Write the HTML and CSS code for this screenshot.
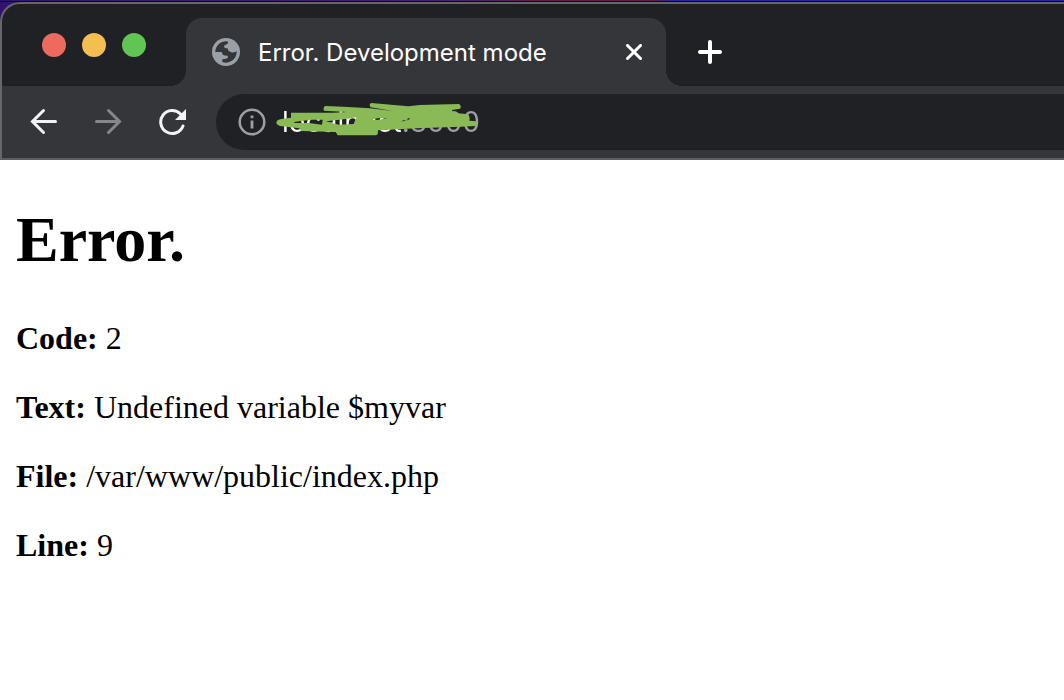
FILE: index.html
```html
<!DOCTYPE html>
<html lang="en">
<head>
<meta charset="utf-8">
<title>Error. Development mode</title>
<link rel="stylesheet" href="styles.css">
</head>
<body>
<div class="desktop">
  <header class="window">
    <div class="tabstrip">
      <div class="lights">
        <button class="light light-close" aria-label="Close window"></button>
        <button class="light light-min" aria-label="Minimize window"></button>
        <button class="light light-max" aria-label="Maximize window"></button>
      </div>
      <div class="tab">
        <svg class="globe" viewBox="0 0 28 28" aria-hidden="true">
          <circle cx="14" cy="14" r="14" fill="#9aa0a6"/>
          <path fill="#35363a" d="M3.300 14A10.700 10.700 0 0 1 15.800 3.400C16.800 5 15 6.800 12.500 7.300C11.600 9 12.500 10.600 15.600 10.300L16.200 12.600C17.500 13 18.500 15 21 14.400L24.700 13.500A10.700 10.700 0 0 1 10.300 24V21.500C11.500 20.600 15.600 21.500 15.900 19C16 17.500 14.500 17.600 13.500 17.500C10.500 17.500 10.500 15.500 9.500 14Z"/>
        </svg>
        <span class="tab-title">Error. Development mode</span>
        <button class="icon-button" aria-label="Close tab">
          <svg class="close-icon" viewBox="0 0 16 16"><path d="M1.500 1.500l13 13M14.500 1.500l-13 13"/></svg>
        </button>
      </div>
      <button class="icon-button new-tab" aria-label="New tab">
        <svg class="plus-icon" viewBox="0 0 24 24"><path d="M12 2v20M2 12h20"/></svg>
      </button>
    </div>
    <div class="toolbar">
      <nav class="nav">
        <button class="icon-button" aria-label="Back">
          <svg class="nav-icon" viewBox="0 0 28 28"><path d="M25.500 13.500H3M13.500 2.500L2.500 13.500l11 11"/></svg>
        </button>
        <button class="icon-button nav-forward" aria-label="Forward">
          <svg class="nav-icon" viewBox="0 0 28 28"><path d="M2.500 13.500H25M14.500 2.500l11 11-11 11"/></svg>
        </button>
        <button class="icon-button" aria-label="Reload">
          <svg class="nav-icon" viewBox="0 0 28 28"><path class="reload-arc" d="M22.500 6A11.500 11.500 0 1 0 25 18"/><path class="reload-head" d="M28 1v11H17z"/></svg>
        </button>
      </nav>
      <div class="omnibox">
        <svg class="info" viewBox="0 0 28 28" aria-hidden="true">
          <circle cx="14" cy="14" r="12.300" fill="none" stroke="#9aa0a6" stroke-width="2.500"/>
          <path fill="#9aa0a6" d="M12.600 7.500h2.800v2.800h-2.800zM12.600 12.500h2.800v8h-2.800z"/>
        </svg>
        <div class="address">
          <input class="url" type="text" aria-label="Address" value="localhost:8000">
          <svg class="scribble" viewBox="48 66 606 102" aria-hidden="true">
            <path fill="#8aba56" fill-rule="evenodd" d="M93 98H220L262 96 192 92Q188 82 196 78L250 80 330 85 398 93 332 82Q325 72 334 69L445 79 480 75 597 72Q606 78 600 86L576 90 577 98 625 103Q631 112 628 122L648 124Q655 132 647 138L600 140 470 145 354 151 353 163 348 166H233L227 156 124 153 118 145 60 138Q49 135 49 127 50 120 64 117L93 113Z
            M102 126L152 119 188 119 186 134 146 129 104 129Z
            M198 124L240 119 289 112 281 132 236 134Z
            M334 120L352 115 382 114 360 119Z
            M424 124L447 114 450 117 436 123Z"/>
          </svg>
        </div>
      </div>
    </div>
  </header>
</div>
<main class="page">
  <h1>Error.</h1>
  <p><b>Code:</b> 2</p>
  <p><b>Text:</b> Undefined variable $myvar</p>
  <p><b>File:</b> /var/www/public/index.php</p>
  <p><b>Line:</b> 9</p>
</main>
</body>
</html>
```
FILE: styles.css
```css
* {
  box-sizing: border-box;
}

body {
  margin: 0;
  background: #fff;
  color: #000;
  font-family: "Liberation Serif", "Times New Roman", serif;
}

button {
  padding: 0;
  border: 0;
  background: none;
  color: inherit;
}

svg {
  display: block;
}

.desktop {
  padding-top: 2px;
  background:
    linear-gradient(#000, #000) 0 1px / 100% 1px no-repeat,
    linear-gradient(90deg, #35126b 0%, #4a1a78 40%, #641a60 50%, #641a60 62%, #2a22a0 63%, #2a22a0 100%);
}

.window {
  overflow: hidden;
  border: solid #66676a;
  border-width: 2px 0 2px 2px;
  border-bottom-color: #5d5e62;
  border-top-left-radius: 20px;
  background: #202124;
  color: #fff;
  font-family: Inter, sans-serif;
  font-size: 24px;
}

.tabstrip {
  display: flex;
  height: 82px;
  padding: 14px 0 0 40px;
}

.lights {
  display: flex;
  gap: 16px;
  padding-top: 15px;
  margin-right: 40px;
}

.light {
  width: 24px;
  height: 24px;
  border-radius: 50%;
}

.light-close {
  background: #ed6a5e;
}

.light-min {
  background: #f5bf4f;
}

.light-max {
  background: #61c554;
}

.tab {
  position: relative;
  display: flex;
  align-items: center;
  gap: 18px;
  width: 480px;
  padding: 0 24px 0 26px;
  border-radius: 16px 16px 0 0;
  background: #35363a;
}

.tab::before,
.tab::after {
  content: "";
  position: absolute;
  bottom: 0;
  width: 16px;
  height: 16px;
}

.tab::before {
  right: 100%;
  background: radial-gradient(circle at 0 0, transparent 16px, #35363a 16px);
}

.tab::after {
  left: 100%;
  background: radial-gradient(circle at 100% 0, transparent 16px, #35363a 16px);
}

.globe,
.info {
  flex: none;
  width: 28px;
  height: 28px;
}

.tab-title {
  flex: 1;
  white-space: nowrap;
}

.icon-button svg {
  fill: none;
  stroke: currentColor;
  stroke-linecap: round;
  stroke-width: 3;
}

.close-icon {
  width: 16px;
  height: 16px;
}

.new-tab {
  margin-left: 32px;
}

.plus-icon {
  width: 24px;
  height: 24px;
}

.icon-button .plus-icon {
  stroke-width: 4;
}

.toolbar {
  display: flex;
  align-items: center;
  gap: 30px;
  height: 72px;
  padding-left: 28px;
  background: #35363a;
}

.nav {
  display: flex;
  gap: 36px;
  color: #f1f3f4;
}

.nav-icon {
  width: 28px;
  height: 28px;
}

.nav-forward {
  color: #86878a;
}

.icon-button .reload-head {
  fill: currentColor;
  stroke: none;
}

.omnibox {
  display: flex;
  flex: 1;
  align-items: center;
  gap: 16px;
  height: 56px;
  padding-left: 22px;
  border-radius: 28px 0 0 28px;
  background: #202124;
}

.address {
  position: relative;
  flex: 1;
}

.url {
  display: block;
  width: 100%;
  padding: 0;
  border: 0;
  outline: 0;
  background: linear-gradient(90deg, #fff 120px, #9aa0a6 120px) text;
  color: transparent;
  font: 28px/32px Inter, sans-serif;
}

.scribble {
  position: absolute;
  top: -4px;
  left: -6px;
  width: 202px;
  height: 34px;
}

.page {
  padding: 0 16px;
  font-size: 32px;
  line-height: 37px;
}

.page h1 {
  margin: 0;
  padding: 43px 0;
  font-size: 64px;
  line-height: 74px;
}

.page p {
  margin: 0 0 32px;
}
```
